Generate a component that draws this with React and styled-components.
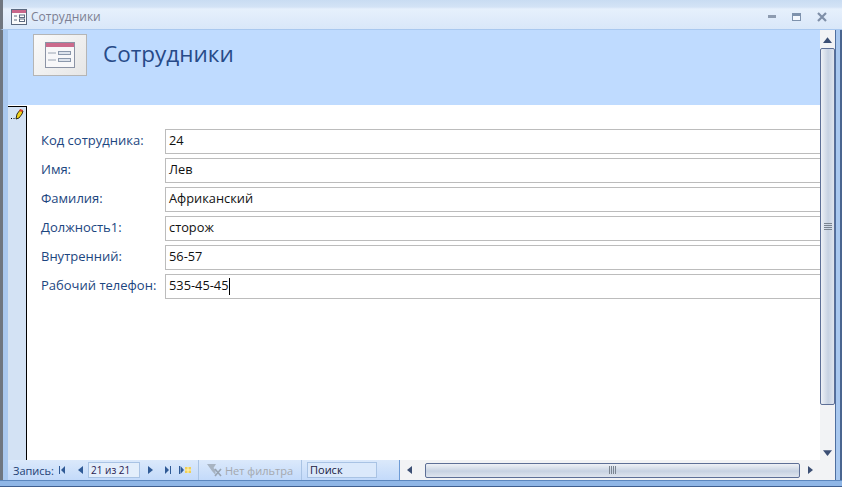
import React from "react";
import styled, { createGlobalStyle } from "styled-components";

const GlobalStyle = createGlobalStyle`
  html, body {
    margin: 0;
    padding: 0;
    width: 842px;
    height: 487px;
    overflow: hidden;
    background: #fff;
  }
  body, input {
    font-family: "Open Sans", "Noto Sans", "Liberation Sans", sans-serif;
  }
`;

const FIELDS = [
  { label: "Код сотрудника:", value: "24" },
  { label: "Имя:", value: "Лев" },
  { label: "Фамилия:", value: "Африканский" },
  { label: "Должность1:", value: "сторож" },
  { label: "Внутренний:", value: "56-57" },
  { label: "Рабочий телефон:", value: "535-45-45", focused: true },
];

const Window = styled.div`
  width: 842px;
  height: 487px;
  display: flex;
  flex-direction: column;
  overflow: hidden;
`;

const TitleBar = styled.div`
  height: 30px;
  flex: none;
  box-sizing: border-box;
  display: flex;
  align-items: center;
  padding: 4px 0 0 8px;
  border-left: 3px solid #6f7680;
  border-bottom: 1px solid #a9c8ef;
  background: linear-gradient(#c9dcf2 0, #d3e3f6 7px, #e6f0fc 9px, #d9e7f9 100%);
`;

const TitleText = styled.span`
  margin-left: 4px;
  font-size: 12px;
  color: #7c7f92;
`;

const WindowButtons = styled.div`
  margin-left: auto;
  display: flex;
  align-items: center;
  gap: 16px;
  padding-right: 15px;
`;

const Middle = styled.div`
  flex: 1;
  display: flex;
  min-height: 0;
`;

const LeftFrame = styled.div`
  width: 5px;
  flex: none;
  border-left: 3px solid #6f7680;
  background: #a9c8ef;
`;

const Client = styled.div`
  flex: 1;
  min-width: 0;
  display: flex;
  flex-direction: column;
`;

const ClientTop = styled.div`
  flex: 1;
  min-height: 0;
  display: flex;
`;

const FormArea = styled.div`
  flex: 1;
  min-width: 0;
  display: flex;
  flex-direction: column;
`;

const FormHeader = styled.div`
  height: 75px;
  flex: none;
  box-sizing: border-box;
  background: #bfdbff;
  display: flex;
  align-items: flex-start;
  padding: 4px 0 0 25px;
`;

const LogoBox = styled.div`
  width: 54px;
  height: 42px;
  box-sizing: border-box;
  border: 1px solid #b5b5b5;
  background: linear-gradient(135deg, #fafafa, #e6e6e6);
  display: flex;
  align-items: center;
  justify-content: center;
`;

const FormTitle = styled.h1`
  margin: 5px 0 0 16px;
  font-size: 22.5px;
  line-height: 30px;
  font-weight: 400;
  color: #274a88;
`;

const FormBody = styled.div`
  flex: 1;
  min-height: 0;
  display: flex;
`;

const Selector = styled.div`
  width: 18px;
  flex: none;
  box-sizing: content-box;
  background: #d3e2f4;
  border-right: 1px solid #000;
  border-top: 1px solid #000;
  margin-top: 1px;
  display: flex;
  justify-content: center;
  align-items: flex-start;
  padding-top: 1px;
`;

const Fields = styled.div`
  flex: 1;
  min-width: 0;
  padding: 24px 0 0 14px;
  display: flex;
  flex-direction: column;
  gap: 4px;
  background: #fff;
`;

const Row = styled.div`
  display: flex;
  align-items: center;
  height: 25px;
`;

const Label = styled.label`
  width: 124px;
  flex: none;
  margin-top: -3px;
  font-size: 13px;
  color: #1c4680;
  white-space: nowrap;
`;

const Value = styled.div`
  flex: 1;
  height: 25px;
  box-sizing: border-box;
  border: 1px solid #bcbcbc;
  border-right: none;
  padding-left: 3px;
  font-size: 12.8px;
  line-height: 20px;
  color: #111;
`;

const Caret = styled.span`
  display: inline-block;
  width: 1px;
  height: 17px;
  margin-left: 1px;
  background: #000;
  vertical-align: middle;
`;

const VScroll = styled.div`
  width: 15px;
  flex: none;
  background: #f2f3f5;
  display: flex;
  flex-direction: column;
  align-items: center;
  padding: 5px 0 3px;
  box-sizing: border-box;
`;

const VThumb = styled.div`
  width: 15px;
  height: 357px;
  margin-top: 4px;
  box-sizing: border-box;
  border: 1px solid #5d6f96;
  border-radius: 2px;
  background: linear-gradient(90deg, #eef1f6, #c7d2e2 55%, #dfe5ee);
  display: flex;
  align-items: center;
  justify-content: center;
`;

const Spacer = styled.div`
  flex: 1;
`;

const Bottom = styled.div`
  height: 20px;
  flex: none;
  display: flex;
  align-items: stretch;
`;

const NavBar = styled.div`
  width: 392px;
  flex: none;
  box-sizing: border-box;
  border-right: 1px solid #6d9bd6;
  background: linear-gradient(#dbe9fb, #c3dafa);
  display: flex;
  align-items: center;
  padding-left: 5px;
  font-size: 11px;
  color: #1c3f74;
`;

const NavLabel = styled.span`
  width: 40px;
  flex: none;
`;

const NavButton = styled.span`
  width: ${({ $w }) => $w || 18}px;
  flex: none;
  display: flex;
  justify-content: center;
  align-items: center;
`;

const RecordBox = styled.span`
  width: 52px;
  height: 16px;
  flex: none;
  box-sizing: border-box;
  border: 1px solid #a9c3e4;
  background: #e3eefb;
  color: #2a1a50;
  padding-left: 2px;
  font-size: 10px;
  line-height: 14px;
`;

const FilterCell = styled.span`
  height: 100%;
  width: 104px;
  flex: none;
  margin-left: 5px;
  box-sizing: border-box;
  border-left: 1px solid #a9c3e4;
  border-right: 1px solid #a9c3e4;
  display: flex;
  align-items: center;
  gap: 3px;
  padding-left: 8px;
  color: #a4a8ae;
`;

const SearchBox = styled.span`
  width: 70px;
  height: 16px;
  flex: none;
  margin-left: 5px;
  box-sizing: border-box;
  border: 1px solid #a9c3e4;
  background: #dbe9fb;
  color: #1a1a40;
  padding-left: 2px;
  line-height: 14px;
`;

const HScroll = styled.div`
  flex: 1;
  min-width: 0;
  background: #f2f3f5;
  display: flex;
  align-items: center;
  padding-left: 5px;
`;

const HThumb = styled.div`
  width: 375px;
  height: 15px;
  margin-left: 12px;
  box-sizing: border-box;
  border: 1px solid #5d6f96;
  border-radius: 2px;
  background: linear-gradient(#eef1f6, #c7d2e2 55%, #dfe5ee);
  display: flex;
  align-items: center;
  justify-content: center;
`;

const RightFrame = styled.div`
  width: 7px;
  flex: none;
  box-sizing: border-box;
  background: #a9c8ef;
  border-left: 1px solid #4f6f9f;
  border-right: 2px solid #4a6590;
`;

const BottomFrame = styled.div`
  height: 7px;
  flex: none;
  box-sizing: border-box;
  background: #8fb6e6;
  border-top: 1px solid #5b86bd;
  border-bottom: 1px solid #3f5f8f;
`;

const FormIcon = ({ size = 16 }) => (
  <svg width={size} height={size} viewBox="0 0 16 16">
    <rect x="0.5" y="0.5" width="15" height="15" fill="#fafafa" stroke="#5c6a80" />
    <rect x="1" y="1" width="14" height="3" fill="#c8668a" />
    <path d="M3 7h3M3 11h3" stroke="#5c6a80" />
    <rect x="8.5" y="6" width="5" height="2.5" fill="#fff" stroke="#5c6a80" />
    <rect x="8.5" y="10" width="5" height="2.5" fill="#fff" stroke="#5c6a80" />
  </svg>
);

const LogoIcon = () => (
  <svg width="30" height="27" viewBox="0 0 30 27">
    <rect x="0.5" y="0.5" width="29" height="25" fill="#f7f7f9" stroke="#8b93a5" />
    <rect x="1" y="1" width="28" height="4" fill="#cb6a8c" />
    <path d="M3 11h8M3 18h8" stroke="#9aa4b2" />
    <rect x="13.5" y="9.5" width="12" height="3" fill="#dde3ec" stroke="#8b98ac" />
    <rect x="13.5" y="16.5" width="12" height="3" fill="#dde3ec" stroke="#8b98ac" />
  </svg>
);

const PencilIcon = () => (
  <svg width="14" height="12" viewBox="0 0 14 12">
    <path d="M1 10.500h1M3.500 10.500h1" stroke="#000" />
    <path d="M6 11l1-5 3-4 3 1-1 3-3 4z" fill="#f2d21a" stroke="#000" strokeWidth="0.8" />
    <path d="M10 1l3 1-1 2-3-1z" fill="#d8402a" />
  </svg>
);

const Arrow = ({ dir, size = 7, color = "#2f5a96" }) => {
  const points = {
    left: "7,0 7,8 2,4",
    right: "2,0 2,8 7,4",
    up: "0,7 8,7 4,2",
    down: "0,2 8,2 4,7",
  };
  return (
    <svg width={size + 1} height={size + 1} viewBox="0 0 8 8">
      <polygon points={points[dir]} fill={color} />
    </svg>
  );
};

const FirstIcon = () => (
  <svg width="8" height="8" viewBox="0 0 8 8">
    <path d="M1 0h1v8H1z" fill="#2f5a96" />
    <polygon points="7,0 7,8 3,4" fill="#2f5a96" />
  </svg>
);

const LastIcon = () => (
  <svg width="8" height="8" viewBox="0 0 8 8">
    <path d="M6 0h1v8H6z" fill="#2f5a96" />
    <polygon points="1,0 1,8 5,4" fill="#2f5a96" />
  </svg>
);

const NewIcon = () => (
  <svg width="12" height="8" viewBox="0 0 12 8">
    <path d="M0 0h1v8H0z" fill="#2f5a96" />
    <polygon points="1.500,0 1.500,8 5,4" fill="#2f5a96" />
    <rect x="6" y="1" width="6" height="6" fill="#f0cf58" />
    <path d="M6 4h6M9 1v6" stroke="#fff3b8" />
  </svg>
);

const FilterIcon = () => (
  <svg width="15" height="13" viewBox="0 0 15 13">
    <path d="M0 0h9L6.500 4l2 2v5L5 7z" fill="#a8b4c2" />
    <path d="M8 5l6 7M14 5l-6 7" stroke="#98a4b2" strokeWidth="1.600" />
  </svg>
);

const MinIcon = () => (
  <svg width="8" height="4" viewBox="0 0 8 4">
    <rect width="8" height="3" fill="#8d9bb0" />
  </svg>
);

const MaxIcon = () => (
  <svg width="9" height="8" viewBox="0 0 9 8">
    <rect x="0.500" y="0.500" width="8" height="7" fill="#f4f8fe" stroke="#7e92ad" />
    <rect x="1" y="1" width="7" height="2" fill="#7e92ad" />
  </svg>
);

const CloseIcon = () => (
  <svg width="10" height="10" viewBox="0 0 10 10">
    <path d="M1 1l8 8M9 1l-8 8" stroke="#7e8fa8" strokeWidth="2.200" />
  </svg>
);

const VGrip = () => (
  <svg width="8" height="7" viewBox="0 0 8 7">
    <path d="M0 .5h8M0 2.500h8M0 4.500h8M0 6.500h8" stroke="#7a8490" />
  </svg>
);

const HGrip = () => (
  <svg width="7" height="8" viewBox="0 0 7 8">
    <path d="M.5 0v8M2.500 0v8M4.500 0v8M6.500 0v8" stroke="#7a8490" />
  </svg>
);

export default function App() {
  return (
    <>
      <GlobalStyle />
      <Window>
        <TitleBar>
          <FormIcon />
          <TitleText>Сотрудники</TitleText>
          <WindowButtons>
            <MinIcon />
            <MaxIcon />
            <CloseIcon />
          </WindowButtons>
        </TitleBar>
        <Middle>
          <LeftFrame />
          <Client>
            <ClientTop>
              <FormArea>
                <FormHeader>
                  <LogoBox>
                    <LogoIcon />
                  </LogoBox>
                  <FormTitle>Сотрудники</FormTitle>
                </FormHeader>
                <FormBody>
                  <Selector>
                    <PencilIcon />
                  </Selector>
                  <Fields>
                    {FIELDS.map((f) => (
                      <Row key={f.label}>
                        <Label>{f.label}</Label>
                        <Value>
                          {f.value}
                          {f.focused && <Caret />}
                        </Value>
                      </Row>
                    ))}
                  </Fields>
                </FormBody>
              </FormArea>
              <VScroll>
                <Arrow dir="up" size={8} color="#3c4f74" />
                <VThumb>
                  <VGrip />
                </VThumb>
                <Spacer />
                <Arrow dir="down" size={8} color="#3c4f74" />
              </VScroll>
            </ClientTop>
            <Bottom>
              <NavBar>
                <NavLabel>Запись:</NavLabel>
                <NavButton>
                  <FirstIcon />
                </NavButton>
                <NavButton $w={17}>
                  <Arrow dir="left" />
                </NavButton>
                <RecordBox>21 из 21</RecordBox>
                <NavButton $w={20}>
                  <Arrow dir="right" />
                </NavButton>
                <NavButton $w={16}>
                  <LastIcon />
                </NavButton>
                <NavButton $w={17}>
                  <NewIcon />
                </NavButton>
                <FilterCell>
                  <FilterIcon />
                  Нет фильтра
                </FilterCell>
                <SearchBox>Поиск</SearchBox>
              </NavBar>
              <HScroll>
                <Arrow dir="left" size={7} color="#3c4f74" />
                <HThumb>
                  <HGrip />
                </HThumb>
                <NavButton $w={20}>
                  <Arrow dir="right" size={7} color="#3c4f74" />
                </NavButton>
              </HScroll>
            </Bottom>
          </Client>
          <RightFrame />
        </Middle>
        <BottomFrame />
      </Window>
    </>
  );
}
